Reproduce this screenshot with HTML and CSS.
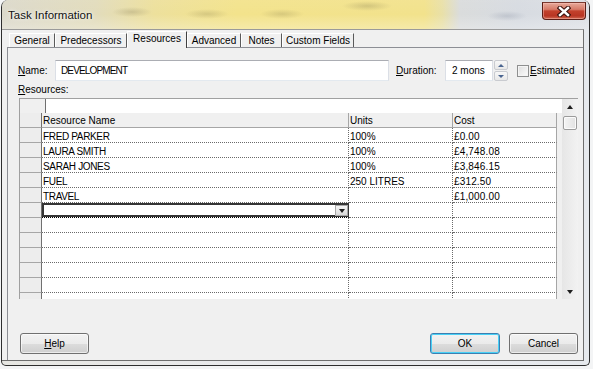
FILE: index.html
```html
<!DOCTYPE html>
<html>
<head>
<meta charset="utf-8">
<title>Task Information</title>
<link rel="stylesheet" href="styles.css">
</head>
<body>
<div class="window">
  <div class="titlebar">
    <span class="title">Task Information</span>
    <div class="close">
      <svg width="14" height="11" viewBox="0 0 14 11">
        <path d="M3 2 L11 9 M11 2 L3 9" stroke="#3b1410" stroke-width="4.6" stroke-linecap="square" fill="none"/>
        <path d="M3 2 L11 9 M11 2 L3 9" stroke="#ffffff" stroke-width="2.4" stroke-linecap="square" fill="none"/>
      </svg>
    </div>
  </div>
  <div class="client">
    <div class="tabs">
      <div class="tab t-general">General</div>
      <div class="tab t-pred">Predecessors</div>
      <div class="tab t-res active">Resources</div>
      <div class="tab t-adv">Advanced</div>
      <div class="tab t-notes">Notes</div>
      <div class="tab t-custom">Custom Fields</div>
    </div>
    <div class="panel">
      <div class="name-row">
        <span class="lbl lbl-name"><u>N</u>ame:</span>
        <div class="textbox name-box">DEVELOPMENT</div>
        <span class="lbl lbl-dur"><u>D</u>uration:</span>
        <div class="textbox dur-box">2 mons</div>
        <div class="spin">
          <div class="spin-btn"><span class="tri-up small blue"></span></div>
          <div class="spin-btn"><span class="tri-down small blue"></span></div>
        </div>
        <span class="check"></span>
        <span class="lbl lbl-est"><u>E</u>stimated</span>
      </div>
      <div class="res-lbl"><u>R</u>esources:</div>
      <div class="grid">
        <div class="grid-main">
          <div class="editbar"><div class="eb-left"></div><div class="eb-field"></div></div>
          <div class="row head">
            <div class="rh"></div>
            <div class="c name">Resource Name</div>
            <div class="c units">Units</div>
            <div class="c cost">Cost</div>
          </div>
          <div class="row">
            <div class="rh"></div>
            <div class="c name caps">FRED PARKER</div>
            <div class="c units">100%</div>
            <div class="c cost num">£0.00</div>
          </div>
          <div class="row">
            <div class="rh"></div>
            <div class="c name caps">LAURA SMITH</div>
            <div class="c units">100%</div>
            <div class="c cost num">£4,748.08</div>
          </div>
          <div class="row">
            <div class="rh"></div>
            <div class="c name caps">SARAH JONES</div>
            <div class="c units">100%</div>
            <div class="c cost num">£3,846.15</div>
          </div>
          <div class="row">
            <div class="rh"></div>
            <div class="c name caps">FUEL</div>
            <div class="c units">250 LITRES</div>
            <div class="c cost num">£312.50</div>
          </div>
          <div class="row">
            <div class="rh"></div>
            <div class="c name caps">TRAVEL</div>
            <div class="c units"></div>
            <div class="c cost num">£1,000.00</div>
          </div>
          <div class="row">
            <div class="rh"></div>
            <div class="c name sel">
              <div class="dd"><span class="tri-down"></span></div>
            </div>
            <div class="c units"></div>
            <div class="c cost"></div>
          </div>
          <div class="row"><div class="rh"></div><div class="c name"></div><div class="c units"></div><div class="c cost"></div></div>
          <div class="row"><div class="rh"></div><div class="c name"></div><div class="c units"></div><div class="c cost"></div></div>
          <div class="row"><div class="rh"></div><div class="c name"></div><div class="c units"></div><div class="c cost"></div></div>
          <div class="row"><div class="rh"></div><div class="c name"></div><div class="c units"></div><div class="c cost"></div></div>
          <div class="row"><div class="rh"></div><div class="c name"></div><div class="c units"></div><div class="c cost"></div></div>
          <div class="row"><div class="rh"></div><div class="c name"></div><div class="c units"></div><div class="c cost"></div></div>
        </div>
        <div class="vscroll">
          <div class="sb-arrow"><span class="tri-up"></span></div>
          <div class="sb-thumb"></div>
          <div class="sb-track"></div>
          <div class="sb-arrow"><span class="tri-down"></span></div>
        </div>
      </div>
      <div class="buttons">
        <div class="btn b-help"><u>H</u>elp</div>
        <div class="btn b-ok">OK</div>
        <div class="btn b-cancel">Cancel</div>
      </div>
    </div>
  </div>
</div>
</body>
</html>
```

FILE: styles.css
```css
* { box-sizing: border-box; }

html, body {
  margin: 0;
  padding: 0;
}

body {
  width: 593px;
  height: 369px;
  overflow: hidden;
  background: #f3f4f5;
  font-family: "Liberation Sans", Arial, sans-serif;
  font-size: 10px;
  color: #000;
}

.window {
  margin-left: 1px;
  width: 589px;
  height: 366px;
  border-left: 1px solid #2e2e2e;
  border-right: 1px solid #2e2e2e;
  border-bottom: 1px solid #2e2e2e;
  border-radius: 7px 7px 5px 5px;
  background: linear-gradient(90deg, #e6e6e2 0%, #e9eaec 40%, #e6e9ed 100%);
  overflow: hidden;
}

.titlebar {
  height: 29px;
  display: flex;
  align-items: flex-start;
  background:
    radial-gradient(ellipse 20px 5px at 130px 12px, rgba(150,140,100,0.35), rgba(150,140,100,0)),
    radial-gradient(ellipse 22px 5px at 205px 14px, rgba(150,140,90,0.3), rgba(150,140,90,0)),
    radial-gradient(ellipse 22px 5px at 280px 14px, rgba(150,140,90,0.3), rgba(150,140,90,0)),
    radial-gradient(ellipse 25px 5px at 365px 6px, rgba(150,140,90,0.35), rgba(150,140,90,0)),
    radial-gradient(ellipse 20px 5px at 505px 16px, rgba(120,130,150,0.25), rgba(120,130,150,0)),
    linear-gradient(180deg, rgba(255,255,255,0.05) 0%, rgba(255,255,255,0) 50%, rgba(255,255,255,0.25) 100%),
    linear-gradient(90deg, #dcd9cb 0%, #e2dcbc 16%, #ede09c 26%, #f3e38c 40%, #f2e28c 72%, #e9e0a8 75%, #dadcdc 78%, #d7dbe1 88%, #dde0e5 100%);
}

.title {
  margin: 9px 0 0 6px;
  font-size: 11.5px;
  line-height: 13px;
  color: #111;
  text-shadow: 0 0 5px rgba(255,255,255,0.9), 0 0 2px rgba(255,255,255,0.8);
}

.close {
  margin: 2px 3px 0 auto;
  width: 44px;
  height: 18px;
  border: 1px solid #5a1e16;
  border-top-color: #7a3a30;
  border-radius: 0 0 4px 4px;
  background: linear-gradient(180deg, #e6a99a 0%, #d67a68 40%, #c2412c 50%, #b83523 80%, #cf6a52 100%);
  box-shadow: inset 0 0 0 1px rgba(255,200,190,0.45);
  display: flex;
  align-items: center;
  justify-content: center;
}

.client {
  width: 582px;
  height: 332px;
  border-top: 1px solid #9a9a9a;
  border-right: 1px solid #6e6e6e;
  border-bottom: 1px solid #6e6e6e;
  background: #f0f0f0;
  display: flex;
  flex-direction: column;
}

.tabs {
  height: 17px;
  display: flex;
  align-items: flex-end;
  padding-left: 7px;
}

.tab {
  height: 14px;
  border-top: 1px solid #ffffff;
  border-left: 1px solid #ffffff;
  border-right: 1px solid #5a5a5a;
  text-align: center;
  line-height: 13px;
  white-space: nowrap;
  background: #f0f0f0;
}

.tab.active {
  height: 17px;
  margin-bottom: -1px;
  line-height: 14px;
  position: relative;
  z-index: 1;
  border-right: 1px solid #404040;
}

.t-general { width: 46px; }
.t-pred { width: 72px; }
.t-res { width: 60px; }
.t-adv { width: 54px; }
.t-notes { width: 41px; }
.t-custom { width: 72px; }

.panel {
  margin-left: 5px;
  height: 313px;
  border-left: 1px solid #8c8e94;
  border-top: 1px solid #8c8e94;
  display: flex;
  flex-direction: column;
}

.name-row {
  margin-top: 12px;
  height: 21px;
  display: flex;
  align-items: center;
  padding-left: 10px;
}

.lbl { white-space: nowrap; }
.lbl-name { width: 37px; }
.lbl-dur { width: 49px; margin-left: 7px; }
.lbl-est { margin-left: 1px; }

.textbox {
  height: 21px;
  background: #fff;
  border: 1px solid #abadb3;
  border-left-color: #dbdfe6;
  border-right-color: #dbdfe6;
  border-bottom-color: #e3e9ef;
  line-height: 19px;
  white-space: nowrap;
  overflow: hidden;
}

.name-box { width: 334px; padding-left: 5px; letter-spacing: -0.85px; }
.dur-box { width: 48px; padding-left: 6px; }

.caps { letter-spacing: -0.35px; }
.num { letter-spacing: 0.15px; }

.spin {
  margin-left: 1px;
  width: 14px;
  height: 21px;
  display: flex;
  flex-direction: column;
  gap: 1px;
}

.spin-btn {
  flex: 1;
  border: 1px solid #c9cbd0;
  border-radius: 2px;
  background: linear-gradient(180deg, #f7f7f7, #e8e8e8);
  display: flex;
  align-items: center;
  justify-content: center;
}

.check {
  margin-left: 9px;
  width: 12px;
  height: 12px;
  border: 1px solid #8e8f8f;
  background: linear-gradient(135deg, #dcdcdc 0%, #f0f0f0 60%, #fbfbfb 100%);
  box-shadow: inset 0 0 0 1px #f4f4f4;
}

.tri-up, .tri-down {
  width: 0;
  height: 0;
  border-left: 3.5px solid transparent;
  border-right: 3.5px solid transparent;
}
.tri-up { border-bottom: 4px solid #1e1e1e; }
.tri-down { border-top: 4px solid #1e1e1e; }
.tri-up.small { border-left-width: 3px; border-right-width: 3px; border-bottom-width: 3px; }
.tri-down.small { border-left-width: 3px; border-right-width: 3px; border-top-width: 3px; }
.tri-up.blue { border-bottom-color: #4a6590; }
.tri-down.blue { border-top-color: #4a6590; }

.res-lbl {
  margin-top: 3px;
  height: 12px;
  line-height: 12px;
  padding-left: 10px;
}

.grid {
  margin-top: 2px;
  margin-left: 11px;
  width: 559px;
  height: 201px;
  border-top: 1px solid #a0a0a0;
  border-left: 1px solid #a0a0a0;
  display: flex;
}

.grid-main {
  width: 542px;
  height: 200px;
  overflow: hidden;
  background: #f0f0f0;
  display: flex;
  flex-direction: column;
}

.editbar {
  height: 14px;
  flex: none;
  display: flex;
}
.eb-left { width: 25px; background: #f0f0f0; }
.eb-field { flex: 1; background: #fff; border-left: 1px solid #6f6f6f; }

.row {
  width: 537px;
  height: 15px;
  flex: none;
  display: flex;
}

.rh {
  width: 22px;
  height: 15px;
  background: #ededed;
  border-right: 1px solid #707070;
  border-bottom: 1px solid #a6a6a6;
}

.c {
  height: 15px;
  background: #fff;
  border-right: 1px dotted #6a6a6a;
  border-bottom: 1px dotted #6a6a6a;
  line-height: 14px;
  padding: 2px 0 0 1px;
  white-space: nowrap;
  overflow: hidden;
}

.c.name { width: 307px; }
.c.units { width: 104px; }
.c.cost { width: 104px; border-right: 1px solid #a6a6a6; }

.row.head .c {
  background: #f0f0f0;
  border-right: 1px solid #a6a6a6;
  border-bottom: 1px solid #a6a6a6;
  padding-top: 1px;
}
.row.head .rh { border-bottom: 1px solid #a6a6a6; }

.c.sel {
  box-shadow: inset 0 0 0 2px #353535;
  border-bottom: 1px dotted #000;
  border-right: 1px solid #353535;
  display: flex;
  justify-content: flex-end;
  padding: 2px 0 1px 0;
}

.dd {
  width: 13px;
  height: 11px;
  border: 1px solid #a8a8a8;
  background: linear-gradient(180deg, #f6f6f6, #dadada);
  display: flex;
  align-items: center;
  justify-content: center;
}

.vscroll {
  width: 16px;
  height: 200px;
  background: linear-gradient(90deg, #e6e6e6, #f2f2f2);
  display: flex;
  flex-direction: column;
  align-items: center;
}

.sb-arrow {
  height: 15px;
  width: 16px;
  display: flex;
  align-items: center;
  justify-content: center;
  flex: none;
}
.sb-arrow .tri-up, .sb-arrow .tri-down {
  border-left-width: 3.5px;
  border-right-width: 3.5px;
}

.sb-thumb {
  margin-top: 2px;
  width: 14px;
  height: 14px;
  flex: none;
  border: 1px solid #9b9b9b;
  border-radius: 2px;
  background: linear-gradient(90deg, #f4f4f4, #e2e2e2);
  box-shadow: inset 0 0 0 1px #fbfbfb;
}

.sb-track { flex: 1; }

.buttons {
  margin-top: 34px;
  height: 21px;
  display: flex;
  padding: 0 5px 0 12px;
}

.btn {
  height: 21px;
  border: 1px solid #707070;
  border-radius: 3px;
  background: linear-gradient(180deg, #f2f2f2 0%, #ebebeb 50%, #dddddd 51%, #cfcfcf 100%);
  box-shadow: inset 0 0 0 1px rgba(255,255,255,0.6);
  text-align: center;
  line-height: 19px;
}

.b-help { width: 69px; }
.b-ok {
  width: 70px;
  margin-left: auto;
  border-color: #3c7fb1;
  box-shadow: inset 0 0 0 1px #48d0f6;
}
.b-cancel { width: 69px; margin-left: 9px; }
```
